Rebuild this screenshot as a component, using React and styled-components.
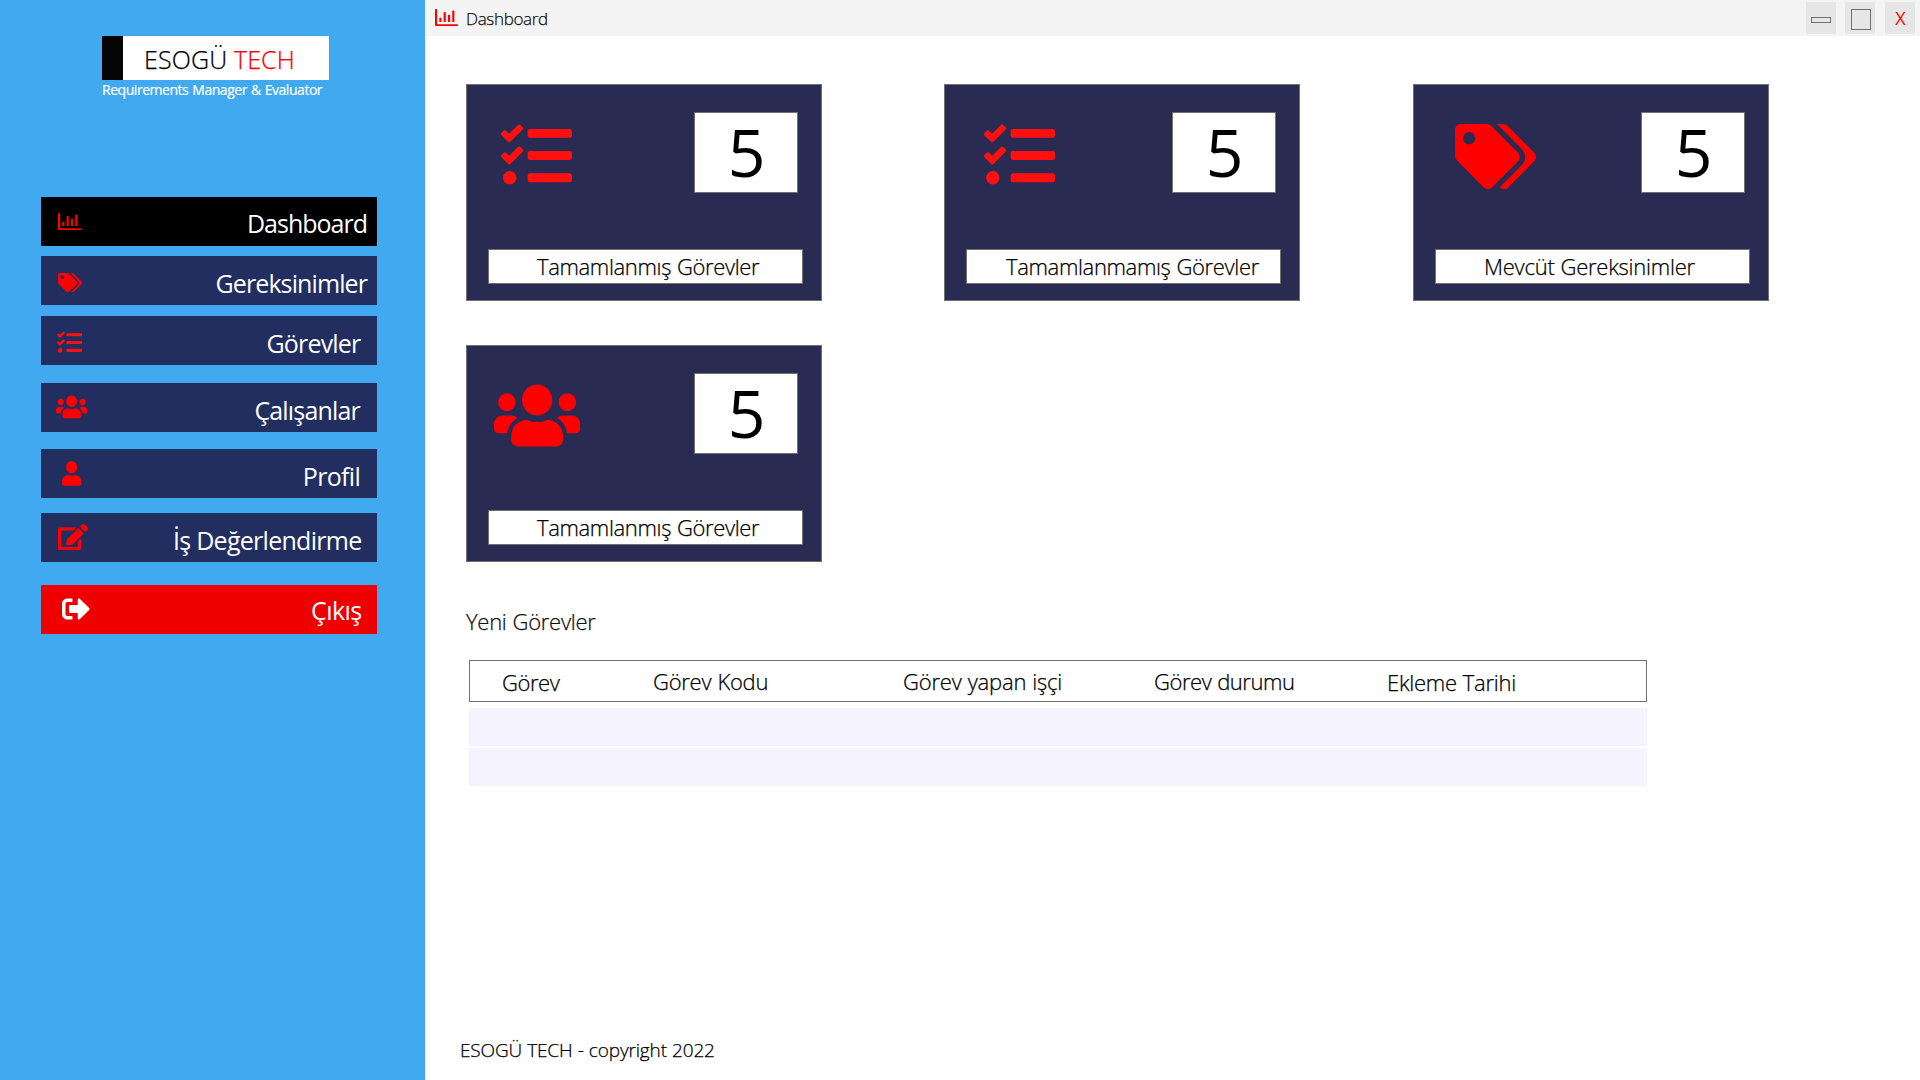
import React from "react";
import styled, { createGlobalStyle, css } from "styled-components";
import {
  FaRegChartBar,
  FaTags,
  FaTasks,
  FaUsers,
  FaUser,
  FaEdit,
  FaSignOutAlt,
} from "react-icons/fa";

const GlobalStyle = createGlobalStyle`
  *, *::before, *::after { box-sizing: border-box; }
  body {
    margin: 0;
    background: #fff;
    font-family: "Open Sans", "Noto Sans", sans-serif;
    overflow: hidden;
  }
`;

/* A semilight weight: the light face with a hairline stroke. */
const semilight = css`
  font-weight: 300;
  -webkit-text-stroke: 0.25px currentColor;
`;

const Shell = styled.div`
  display: flex;
  width: 1920px;
  height: 1080px;
`;

const Sidebar = styled.aside`
  width: 425px;
  flex: none;
  background: #41a9f0;
  display: flex;
  flex-direction: column;
  align-items: flex-start;
`;

const Brand = styled.div`
  margin: 36px 0 0 102px;
  height: 161px;
`;

const Logo = styled.div`
  width: 227px;
  height: 44px;
  padding: 1px 0 0 21px;
  border-left: 21px solid #050505;
  background: #fff;
  color: #000;
  font-size: 25px;
  line-height: 44px;
  ${semilight}
  letter-spacing: ${(p) => p.$spacing}px;
  white-space: pre;
`;

const LogoAccent = styled.span`
  color: #ff0000;
`;

const Tagline = styled.div`
  font-size: 14px;
  line-height: 20px;
  -webkit-text-stroke: 0.2px currentColor;
  letter-spacing: ${(p) => p.$spacing}px;
  word-spacing: 0.8px;
  color: #fff;
  white-space: nowrap;
`;

const NavButton = styled.button`
  display: flex;
  align-items: flex-start;
  width: 336px;
  height: 49px;
  margin: 0 0 ${(p) => p.$gap}px 41px;
  padding: 0 ${(p) => p.$end}px 0 ${(p) => p.$start}px;
  border: 0;
  background: ${(p) => p.$bg};
  color: #fff;
  font: 400 25px/49px "Open Sans", "Noto Sans", sans-serif;
`;

const Glyph = styled.span`
  display: block;
  flex: none;
  margin: ${(p) => p.$top}px 0 0 ${(p) => p.$left || 0}px;
  width: ${(p) => p.$w}px;
  height: ${(p) => p.$h}px;
  color: ${(p) => p.$color || "#ff0000"};
  svg {
    display: block;
    width: 100%;
    height: 100%;
  }
`;

const NavText = styled.span`
  margin-left: auto;
  padding-top: ${(p) => p.$drop}px;
  letter-spacing: ${(p) => p.$spacing}px;
  white-space: nowrap;
`;

const Main = styled.main`
  flex: 1;
  display: flex;
  flex-direction: column;
  min-width: 0;
`;

const TitleBar = styled.header`
  display: flex;
  height: 36px;
  flex: none;
  padding: 0 5px 0 10px;
  background: #f4f4f4;
`;

const Title = styled.span`
  margin-left: 8px;
  padding-top: 1px;
  font-size: 17px;
  line-height: 35px;
  ${semilight}
  letter-spacing: ${(p) => p.$spacing}px;
  color: #111;
`;

const WindowControls = styled.div`
  display: flex;
  margin-left: auto;
  padding-top: 2px;
`;

const WindowButton = styled.button`
  display: flex;
  justify-content: center;
  width: 30px;
  height: 32px;
  margin-left: ${(p) => p.$gap}px;
  padding: 0 0 0 ${(p) => p.$inset || 0}px;
  border: 0;
  background: #e6e6e6;
  color: #ff0000;
  font: 400 18px/33px "Open Sans", "Noto Sans", sans-serif;
`;

const WindowShape = styled.span`
  width: 20px;
  height: ${(p) => p.$h}px;
  margin-top: ${(p) => p.$top}px;
  border: 1px solid #707070;
`;

const Cards = styled.section`
  display: grid;
  grid-template-columns: 478px 469px 356px;
  row-gap: 44px;
  margin: 48px 0 0 41px;
`;

const Card = styled.article`
  display: flex;
  flex-direction: column;
  justify-content: space-between;
  width: 356px;
  height: 217px;
  padding: 27px 18px 16px 21px;
  border: 1px solid #707070;
  background: #292b52;
`;

const CardTop = styled.div`
  display: flex;
  align-items: flex-start;
  padding-right: 5px;
`;

const Count = styled.div`
  width: 104px;
  height: 81px;
  margin-left: auto;
  padding-left: 1px;
  border: 1px solid #707070;
  background: #fff;
  color: #000;
  font-size: 66px;
  line-height: 76px;
  text-align: center;
`;

const CardLabel = styled.div`
  height: 35px;
  padding-left: ${(p) => p.$pad}px;
  border: 1px solid #707070;
  background: #fff;
  color: #000;
  font-size: 22px;
  line-height: 32px;
  ${semilight}
  letter-spacing: ${(p) => p.$spacing}px;
  word-spacing: 0.6px;
  white-space: nowrap;
`;

const SectionTitle = styled.h2`
  margin: 43px 0 0 41px;
  height: 55px;
  font-size: 22px;
  line-height: 32px;
  ${semilight}
  letter-spacing: ${(p) => p.$spacing}px;
  word-spacing: 0.6px;
  color: #111;
`;

const Table = styled.div`
  width: 1178px;
  margin-left: 44px;
`;

const HeadRow = styled.div`
  display: grid;
  grid-template-columns: 151px 250px 251px 233px 1fr;
  height: 42px;
  margin-bottom: 6px;
  padding-left: 32px;
  border: 1px solid #707070;
`;

const HeadCell = styled.span`
  padding-top: ${(p) => p.$drop}px;
  font-size: 22px;
  line-height: 40px;
  ${semilight}
  letter-spacing: ${(p) => p.$spacing}px;
  word-spacing: 0.6px;
  color: #000;
  white-space: nowrap;
`;

const BodyRow = styled.div`
  height: 38px;
  margin-bottom: 2px;
  background: #f5f3ff;
`;

const Footer = styled.footer`
  margin: auto 0 0 35px;
  height: 44px;
  font-size: 19px;
  line-height: 28px;
  ${semilight}
  letter-spacing: ${(p) => p.$spacing}px;
  word-spacing: 0.4px;
  color: #000;
`;

const NAVY = "#212e5f";

const navItems = [
  { text: "Dashboard", Icon: FaRegChartBar, box: "0 64 512 384", w: 23, h: 17.3, start: 17, top: 15.7, end: 10, drop: 2, ls: -1, gap: 10, bg: "#000" },
  { text: "Gereksinimler", Icon: FaTags, w: 24.2, h: 19.4, start: 17, top: 16.6, end: 10, drop: 3, ls: -0.9, gap: 11, bg: NAVY },
  { text: "Görevler", Icon: FaTasks, w: 25, h: 25, start: 16, top: 14.4, end: 16.5, drop: 3, ls: -0.8, gap: 18, bg: NAVY, color: "#ff1010" },
  { text: "Çalışanlar", Icon: FaUsers, w: 31.3, h: 25.8, start: 15, top: 11.2, end: 17, drop: 3, ls: -0.82, gap: 17, bg: NAVY },
  { text: "Profil", Icon: FaUser, w: 19.3, h: 24.7, start: 21, top: 12.3, end: 17, drop: 3, ls: -0.7, gap: 15, bg: NAVY },
  { text: "İş Değerlendirme", Icon: FaEdit, w: 30, h: 26.3, start: 16.7, top: 10.7, end: 15.5, drop: 3, ls: -0.72, gap: 23, bg: NAVY },
  { text: "Çıkış", Icon: FaSignOutAlt, w: 28, h: 28, start: 21, top: 9.6, end: 15.5, drop: 1, ls: -0.6, gap: 0, bg: "#ee0000", color: "#fff" },
];

const cards = [
  { label: "Tamamlanmış Görevler", Icon: FaTasks, w: 71, h: 71, left: 13.4, top: 8, pad: 48, ls: -0.36, color: "#ff1010" },
  { label: "Tamamlanmamış Görevler", Icon: FaTasks, w: 71, h: 71, left: 18.3, top: 8, pad: 39, ls: -0.35, color: "#ff1010" },
  { label: "Mevcüt Gereksinimler", Icon: FaTags, w: 81, h: 65, left: 20.3, top: 12, pad: 48, ls: -0.25 },
  { label: "Tamamlanmış Görevler", Icon: FaUsers, w: 86.3, h: 70.9, left: 5.7, top: 6.6, pad: 48, ls: -0.36 },
];

const columns = [
  { text: "Görev", drop: 1, ls: -0.45 },
  { text: "Görev Kodu", drop: 0, ls: -0.25 },
  { text: "Görev yapan işçi", drop: 0, ls: -0.2 },
  { text: "Görev durumu", drop: 0, ls: -0.45 },
  { text: "Ekleme Tarihi", drop: 1, ls: -0.27 },
];

export default function App() {
  return (
    <>
      <GlobalStyle />
      <Shell>
        <Sidebar>
          <Brand>
            <Logo $spacing={0.13}>
              ESOGÜ <LogoAccent>TECH</LogoAccent>
            </Logo>
            <Tagline $spacing={-0.46}>Requirements Manager &amp; Evaluator</Tagline>
          </Brand>
          {navItems.map(({ text, Icon, ...n }) => (
            <NavButton key={text} $bg={n.bg} $gap={n.gap} $start={n.start} $end={n.end}>
              <Glyph $w={n.w} $h={n.h} $top={n.top} $color={n.color}>
                <Icon preserveAspectRatio="none" {...(n.box ? { viewBox: n.box } : {})} />
              </Glyph>
              <NavText $drop={n.drop} $spacing={n.ls}>{text}</NavText>
            </NavButton>
          ))}
        </Sidebar>
        <Main>
          <TitleBar>
            <Glyph $w={23} $h={17.3} $top={9}>
              <FaRegChartBar viewBox="0 64 512 384" preserveAspectRatio="none" />
            </Glyph>
            <Title $spacing={-0.33}>Dashboard</Title>
            <WindowControls>
              <WindowButton $gap={0}><WindowShape $h={6} $top={15} /></WindowButton>
              <WindowButton $gap={9} $inset={2}><WindowShape $h={21} $top={7} /></WindowButton>
              <WindowButton $gap={10} $inset={1}>X</WindowButton>
            </WindowControls>
          </TitleBar>
          <Cards>
            {cards.map(({ label, Icon, ...c }, i) => (
              <Card key={i}>
                <CardTop>
                  <Glyph $w={c.w} $h={c.h} $left={c.left} $top={c.top} $color={c.color}>
                    <Icon preserveAspectRatio="none" />
                  </Glyph>
                  <Count>5</Count>
                </CardTop>
                <CardLabel $pad={c.pad} $spacing={c.ls}>{label}</CardLabel>
              </Card>
            ))}
          </Cards>
          <SectionTitle $spacing={-0.28}>Yeni Görevler</SectionTitle>
          <Table>
            <HeadRow>
              {columns.map((c) => (
                <HeadCell key={c.text} $drop={c.drop} $spacing={c.ls}>{c.text}</HeadCell>
              ))}
            </HeadRow>
            <BodyRow />
            <BodyRow />
          </Table>
          <Footer $spacing={-0.15}>ESOGÜ TECH - copyright 2022</Footer>
        </Main>
      </Shell>
    </>
  );
}
